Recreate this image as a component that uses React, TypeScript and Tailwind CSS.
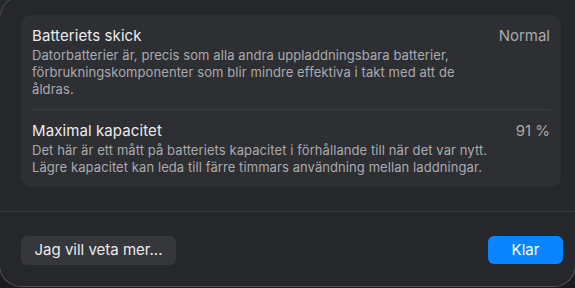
import React from "react";

const font = { fontFamily: "Inter, 'Liberation Sans', sans-serif" };

function Section({ title, value, lines }: { title: string; value: string; lines: string[] }) {
  return (
    <div className="flex justify-between pt-[12px] pb-[11px]">
      <div className="flex flex-col">
        <div className="text-[15px] leading-[18px] text-[#ececed] tracking-[0.1px]">{title}</div>
        <div className="mt-[2px] text-[13px] leading-[17px] text-[#aaabae] whitespace-nowrap tracking-[0.08px]">
          {lines.map((l, i) => (
            <div key={i}>{l}</div>
          ))}
        </div>
      </div>
      <div className="text-[15px] leading-[18px] text-[#a9aaad]">{value}</div>
    </div>
  );
}

export default function App() {
  return (
    <div className="relative w-[575px] h-[288px] overflow-hidden bg-[#1b1b1d]" style={font}>
      <div className="-ml-[1px] w-[577px] h-[287px] rounded-b-[22px] border-x border-b border-[#505154] bg-[#25272a] flex flex-col">
        <div className="pl-[21px] pt-[15px]">
          <div className="w-[540px] rounded-[10px] bg-[#2e2f33] px-[11px]">
            <Section
              title="Batteriets skick"
              value="Normal"
              lines={[
                "Datorbatterier är, precis som alla andra uppladdningsbara batterier,",
                "förbrukningskomponenter som blir mindre effektiva i takt med att de",
                "åldras.",
              ]}
            />
            <div className="h-px bg-[#3b3c40]" />
            <Section
              title="Maximal kapacitet"
              value="91 %"
              lines={[
                "Det här är ett mått på batteriets kapacitet i förhållande till när det var nytt.",
                "Lägre kapacitet kan leda till färre timmars användning mellan laddningar.",
              ]}
            />
          </div>
        </div>
        <div className="mt-[24px] h-px bg-[#3a3b3e]" />
        <div className="mt-[24px] pl-[21px] w-[563px] flex justify-between">
          <button className="h-[29px] w-[155px] rounded-[6px] bg-[#36373b] text-[15px] text-[#ececed]">
            Jag vill veta mer...
          </button>
          <button className="h-[28px] w-[75px] rounded-[6px] bg-[#0b84ff] text-[15px] text-white">
            Klar
          </button>
        </div>
      </div>
      <svg className="absolute left-0 top-0" width="12" height="16" viewBox="0 0 12 16">
        <path d="M0.5 15 Q1.5 4 10 0" fill="none" stroke="#4a4b4e" strokeWidth="1" />
      </svg>
    </div>
  );
}
